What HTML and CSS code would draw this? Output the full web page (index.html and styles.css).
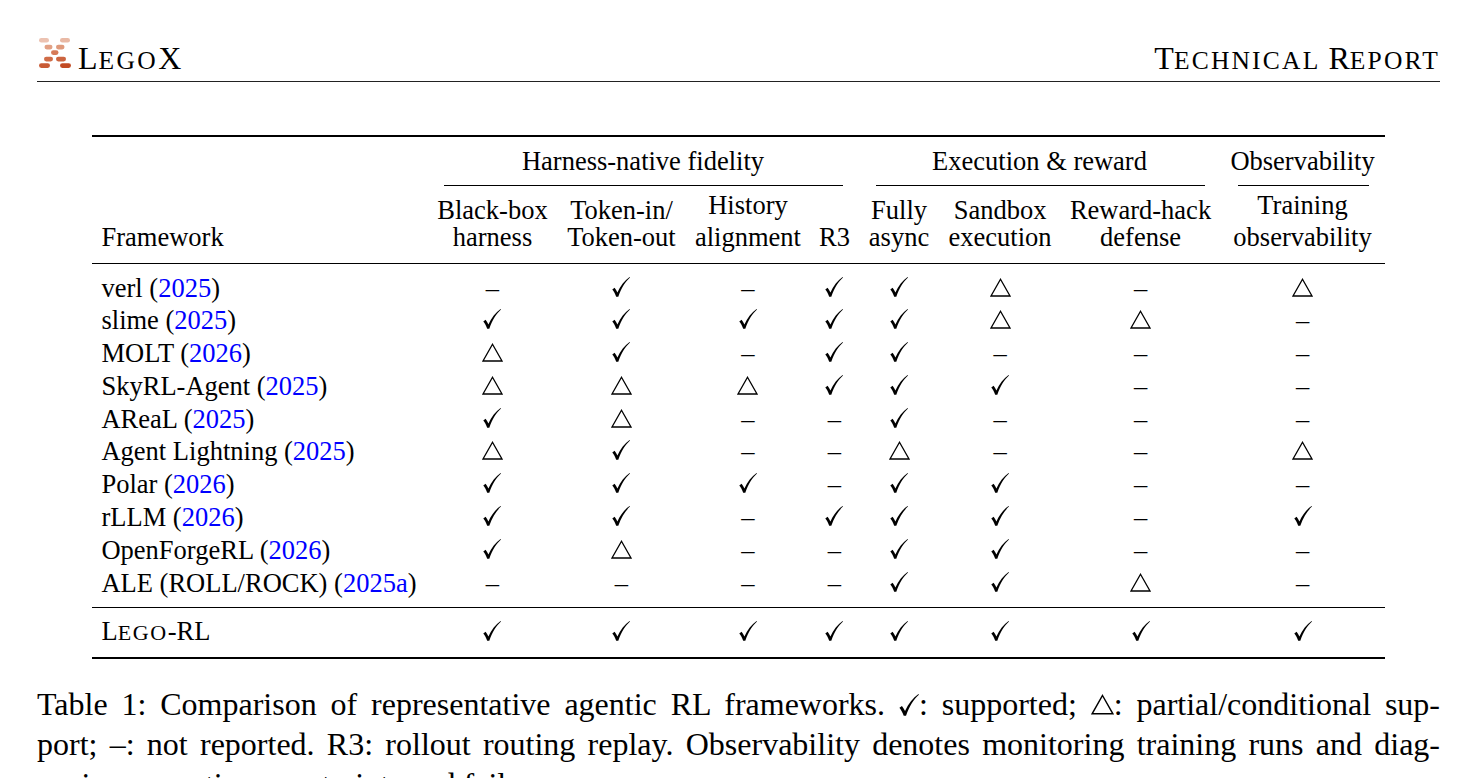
FILE: index.html
```html
<!DOCTYPE html>
<html lang="en">
<head>
<meta charset="utf-8">
<title>LegoX Technical Report</title>
<link rel="stylesheet" href="styles.css">
</head>
<body>
<div class="page">
  <header class="runhead">
    <div class="brand">
      <svg class="logo" width="36" height="32" viewBox="37 37 36 32" aria-hidden="true">
        <rect x="39" y="38" width="10" height="4.6" rx="2.3" fill="#ecc2b1"/>
        <rect x="60" y="38" width="10" height="4.6" rx="2.3" fill="#e9b9a5"/>
        <rect x="44.5" y="44.8" width="8" height="4.6" rx="2.3" fill="#e2a084"/>
        <rect x="56" y="44.8" width="8.5" height="4.6" rx="2.3" fill="#df9a7c"/>
        <rect x="51" y="50.3" width="7.5" height="4.6" rx="2.3" fill="#d67a57"/>
        <rect x="44" y="56.8" width="9" height="4.6" rx="2.3" fill="#d06c47"/>
        <rect x="56" y="56.8" width="10" height="4.6" rx="2.3" fill="#cc643f"/>
        <rect x="39" y="63.3" width="11" height="4.6" rx="2.3" fill="#c85a34"/>
        <rect x="60" y="63.3" width="11" height="4.6" rx="2.3" fill="#c24a22"/>
      </svg>
      <span class="brand-name">L<span class="sc">EGO</span>X</span>
    </div>
    <div class="report">T<span class="sc">ECHNICAL</span> R<span class="sc">EPORT</span></div>
  </header>

  <table class="cmp">
    <colgroup>
      <col class="c-fw"><col class="c-bb"><col class="c-ti"><col class="c-ha"><col class="c-r3">
      <col class="c-fa"><col class="c-sb"><col class="c-rh"><col class="c-to">
    </colgroup>
    <thead>
      <tr class="groups">
        <th></th>
        <th colspan="4"><span class="gname">Harness-native fidelity</span><div class="cmid"></div></th>
        <th colspan="3"><span class="gname">Execution &amp; reward</span><div class="cmid"></div></th>
        <th><span class="gname">Observability</span><div class="cmid"></div></th>
      </tr>
      <tr class="heads">
        <th class="fw">Framework</th>
        <th><span class="l1">Black-box</span><span>harness</span></th>
        <th><span class="l1">Token-in/</span><span>Token-out</span></th>
        <th><span class="l1 up">History</span><span>alignment</span></th>
        <th>R3</th>
        <th><span class="l1">Fully</span><span>async</span></th>
        <th><span class="l1">Sandbox</span><span>execution</span></th>
        <th><span class="l1">Reward-hack</span><span>defense</span></th>
        <th><span class="l1 up">Training</span><span>observability</span></th>
      </tr>
    </thead>
    <tbody id="rows"></tbody>
    <tbody>
      <tr class="ours" id="ours"></tr>
    </tbody>
  </table>

  <p class="caption">
    <span class="ln">Table 1: Comparison of representative agentic RL frameworks. <svg class="ck big" viewBox="0 0 18 20"><path d="M0.3 12.4 L2.6 10.8 C3.7 12.3 4.6 13.9 5.4 15.4 C8.4 8.8 12.6 3.4 17.6 0 L18 0.6 C13.4 4.8 9.4 10.8 6.3 19.8 L4.2 19.8 C3.2 16.9 1.9 14.4 0.3 12.4 Z"/></svg>: supported; <svg class="tr big" viewBox="0 0 21 19"><path d="M10.5 1.3 L20 18 L1 18 Z"/></svg>: partial/conditional sup-</span>
    <span class="ln">port; –: not reported. R3: rollout routing replay. Observability denotes monitoring training runs and diag-</span>
    <span class="ln last">nosing execution constraints and failures.</span>
  </p>
</div>
<script src="app.js"></script>
</body>
</html>
```

FILE: app.js
```js
(function () {
  var CK = '<svg class="ck" viewBox="0 0 18 20"><path d="M0.3 12.4 L2.6 10.8 C3.7 12.3 4.6 13.9 5.4 15.4 C8.4 8.8 12.6 3.4 17.6 0 L18 0.6 C13.4 4.8 9.4 10.8 6.3 19.8 L4.2 19.8 C3.2 16.9 1.9 14.4 0.3 12.4 Z"/></svg>';
  var TR = '<svg class="tr" viewBox="0 0 21 19"><path d="M10.5 1.3 L20 18 L1 18 Z"/></svg>';
  var NA = '<span class="na">\u2013</span>';
  var map = { y: CK, p: TR, n: NA };

  var rows = [
    ['verl', '2025', 'nynyypnp'],
    ['slime', '2025', 'yyyyyppn'],
    ['MOLT', '2026', 'pynyynnn'],
    ['SkyRL-Agent', '2025', 'pppyyynn'],
    ['AReaL', '2025', 'ypnnynnn'],
    ['Agent Lightning', '2025', 'pynnpnnp'],
    ['Polar', '2026', 'yyynyynn'],
    ['rLLM', '2026', 'yynyyyny'],
    ['OpenForgeRL', '2026', 'ypnnyynn'],
    ['ALE (ROLL/ROCK)', '2025a', 'nnnnyypn']
  ];

  function cells(code) {
    var h = '';
    for (var i = 0; i < code.length; i++) h += '<td>' + map[code[i]] + '</td>';
    return h;
  }

  var html = '';
  rows.forEach(function (r, i) {
    var cls = i === 0 ? ' class="first"' : (i === rows.length - 1 ? ' class="last"' : '');
    html += '<tr' + cls + '><td class="fw">' + r[0] + ' (<a class="cite" href="#">' + r[1] + '</a>)</td>' + cells(r[2]) + '</tr>';
  });
  document.getElementById('rows').innerHTML = html;
  document.getElementById('ours').innerHTML =
    '<td class="fw">L<span class="sc">EGO</span>-RL</td>' + cells('yyyyyyyy');
})();
```

FILE: styles.css
```css
* { box-sizing: border-box; }

html, body {
  margin: 0;
  padding: 0;
  background: #ffffff;
  color: #000000;
}

body {
  font-family: "Liberation Serif", "Times New Roman", serif;
  overflow: hidden;
}

.page {
  width: 1476px;
  height: 778px;
  padding: 0 36px 0 37px;
  overflow: hidden;
}

/* running head */
.runhead {
  box-sizing: content-box;
  height: 77px;
  padding-bottom: 4px;
  border-bottom: 1px solid #222;
  display: flex;
  justify-content: space-between;
  align-items: flex-end;
}

.brand {
  display: flex;
  align-items: flex-end;
}

.logo {
  display: block;
  margin-bottom: 8px;
}

.brand-name {
  font-size: 32px;
  line-height: 32px;
  margin-left: 5px;
}

.brand-name .sc {
  font-size: 25.5px;
  letter-spacing: 2.4px;
  margin-left: 1px;
}

.report {
  font-size: 32px;
  line-height: 32px;
}

.report .sc {
  font-size: 25.5px;
  letter-spacing: 2.2px;
}

/* table */
.cmp {
  border-collapse: separate;
  border-spacing: 0;
  table-layout: fixed;
  width: 1292px;
  margin: 53px auto 0;
  border-top: 2px solid #000;
  border-bottom: 2px solid #000;
  font-size: 26.5px;
}

.c-fw { width: 335px; }
.c-bb { width: 130px; }
.c-ti { width: 128px; }
.c-ha { width: 125px; }
.c-r3 { width: 48px; }
.c-fa { width: 81px; }
.c-sb { width: 121px; }
.c-rh { width: 160px; }
.c-to { width: 164px; }

.cmp th {
  font-weight: normal;
  text-align: center;
  padding: 0;
}

.groups th {
  padding-top: 10px;
  vertical-align: top;
  line-height: 28px;
}

.gname {
  display: block;
  white-space: nowrap;
}

.cmid {
  margin: 10px 16px 0 17px;
  border-top: 1px solid #000;
}

.heads th {
  vertical-align: bottom;
  line-height: 27px;
  padding: 11px 0 11.5px;
  border-bottom: 1px solid #000;
  white-space: nowrap;
}

.heads th span {
  display: block;
}

.heads th .l1.up {
  margin-top: -5px;
  margin-bottom: 5px;
}

.cmp th.fw,
.cmp td.fw {
  text-align: left;
  padding-left: 9px;
  white-space: nowrap;
}

.cmp td {
  text-align: center;
  padding: 0;
  line-height: 32.8px;
  white-space: nowrap;
}

tr.first td { padding-top: 8px; }
tr.last td { padding-bottom: 8px; }

tr.ours td {
  border-top: 1px solid #000;
  padding-top: 7px;
  padding-bottom: 7px;
}

.cite {
  color: #0000ff;
  text-decoration: none;
}

.cmp .sc {
  font-size: 22px;
  letter-spacing: 1.6px;
}

.ck {
  width: 18px;
  height: 20px;
  vertical-align: 0;
  fill: #000;
}

.tr {
  width: 21px;
  height: 19px;
  vertical-align: 0;
  fill: none;
  stroke: #000;
  stroke-width: 1.3;
}

.ck.big { width: 20px; height: 22px; vertical-align: -1px; }
.tr.big { width: 23px; height: 21px; vertical-align: 0; }

.na {
  display: inline-block;
}

/* caption */
.caption {
  margin: 25px 0 0;
  font-size: 32px;
  line-height: 40px;
}

.caption .ln {
  display: block;
  white-space: nowrap;
  text-align: justify;
  text-align-last: justify;
}

.caption .ln.last {
  text-align-last: left;
}
```
